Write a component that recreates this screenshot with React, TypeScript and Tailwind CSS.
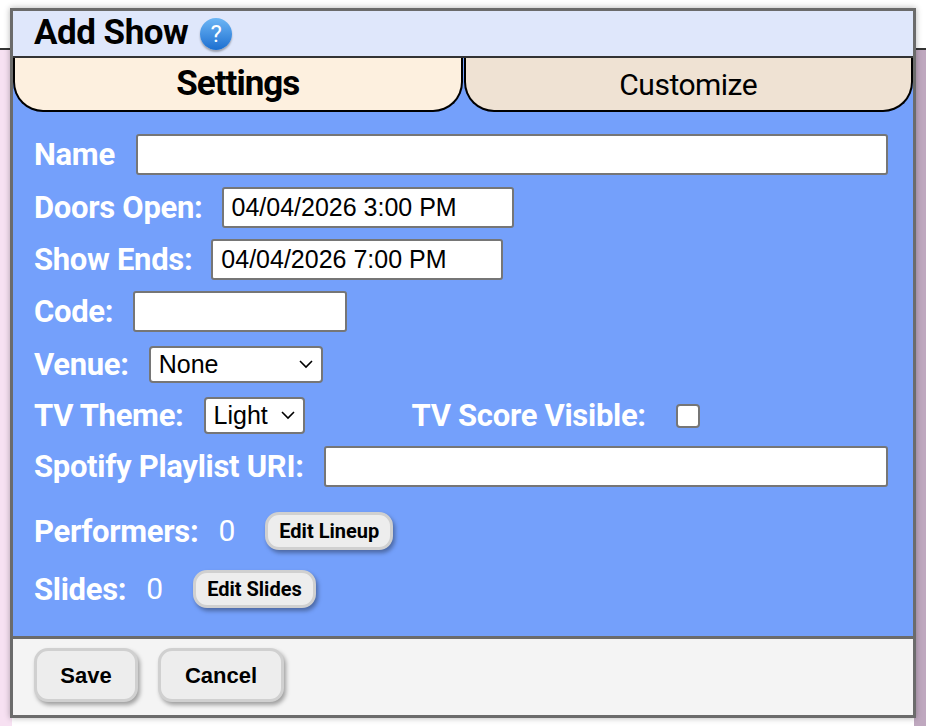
import React from 'react';

const label = 'font-bold text-white text-[31px] leading-none whitespace-nowrap tracking-[-0.3px]';
const field =
  'h-[41px] rounded-[3px] border-2 border-[#767676] bg-white px-2 text-[25px] text-black outline-none';
const pill =
  'rounded-[14px] border-[3px] border-[#d0d0d0] bg-[#ededed] font-bold text-black shadow-[2px_3px_4px_rgba(0,0,0,0.35)]';
const arial = { fontFamily: '"Liberation Sans", Arial, sans-serif' };

function Select({ value, w }: { value: string; w: string }) {
  return (
    <div className={`flex h-[37px] items-center justify-between rounded-[4px] border-2 border-[#767676] bg-white pl-2 pr-2 text-[25px] text-black ${w}`} style={arial}>
      <span>{value}</span>
      <svg width="14" height="9" viewBox="0 0 14 9" fill="none" stroke="#000" strokeWidth="1.6">
        <path d="M1 1l6 6 6-6" />
      </svg>
    </div>
  );
}

export default function App() {
  return (
    <div className="relative h-[726px] w-[926px] overflow-hidden bg-white" style={{ fontFamily: 'Roboto, "Liberation Sans", sans-serif' }}>
      <div className="absolute left-0 top-[48px] h-[678px] w-[12px] border-t-2 border-[#333] bg-[#f7e1f2]" />
      <div className="absolute right-0 top-[48px] h-[678px] w-[12px] border-t-2 border-[#333] bg-[#bfa8bf]" />
      <div className="absolute left-[10px] top-[8px] flex h-[710px] w-[906px] flex-col border-[3px] border-[#6b6b6b] bg-[#74a0fb] shadow-[0_0_6px_rgba(0,0,0,0.3)]">
        <div className="flex h-[47px] items-center gap-3 border-b-2 border-[#333] bg-[#dfe7fb] pl-[21px]">
          <span className="text-[35px] font-bold tracking-[-0.5px] text-black">Add Show</span>
          <span className="flex h-[32px] w-[32px] items-center justify-center rounded-full bg-gradient-to-b from-[#6cb6f5] to-[#1a6fd0] text-[24px] leading-none text-white shadow-[0_2px_2px_rgba(0,0,0,0.3)]">?</span>
        </div>
        <div className="flex h-[54px]">
          <div className="flex flex-1 items-center justify-center rounded-b-[30px] border-2 border-t-0 border-black bg-[#fdf0df] text-[35px] font-bold tracking-[-1px] text-black">
            Settings
          </div>
          <div className="ml-[1px] flex flex-1 items-center justify-center rounded-b-[30px] border-2 border-t-0 border-black bg-[#efe2d3] text-[30px] tracking-[-0.5px] text-black">
            Customize
          </div>
        </div>
        <div className="flex flex-1 flex-col pl-[21px] pr-[25px] pt-[22px]">
          <div className="flex items-center gap-[21px]">
            <span className={label}>Name</span>
            <input className={`${field} flex-1`} style={arial} />
          </div>
          <div className="mt-[12px] flex items-center gap-[19px]">
            <span className={label}>Doors Open:</span>
            <input className={`${field} w-[292px]`} style={arial} defaultValue="04/04/2026 3:00 PM" />
          </div>
          <div className="mt-[11px] flex items-center gap-[19px]">
            <span className={label}>Show Ends:</span>
            <input className={`${field} w-[292px]`} style={arial} defaultValue="04/04/2026 7:00 PM" />
          </div>
          <div className="mt-[11px] flex items-center gap-[20px]">
            <span className={label}>Code:</span>
            <input className={`${field} w-[214px]`} style={arial} />
          </div>
          <div className="mt-[14px] flex items-center gap-[20px]">
            <span className={label}>Venue:</span>
            <Select value="None" w="w-[174px]" />
          </div>
          <div className="mt-[14px] flex items-center">
            <span className={label}>TV Theme:</span>
            <div className="ml-[20px]"><Select value="Light" w="w-[101px]" /></div>
            <span className={`${label} ml-[107px]`}>TV Score Visible:</span>
            <div className="ml-[30px] h-[24px] w-[24px] rounded-[4px] border-2 border-[#767676] bg-white" />
          </div>
          <div className="mt-[12px] flex items-center gap-[20px]">
            <span className={label}>Spotify Playlist URI:</span>
            <input className={`${field} flex-1`} style={arial} />
          </div>
          <div className="mt-[25px] flex items-center">
            <span className={label}>Performers:</span>
            <span className="ml-[20px] text-[30px] leading-none text-white">0</span>
            <button className={`${pill} ml-[30px] h-[38px] px-[11px] text-[20px]`}>Edit Lineup</button>
          </div>
          <div className="mt-[20px] flex items-center">
            <span className={label}>Slides:</span>
            <span className="ml-[20px] text-[30px] leading-none text-white">0</span>
            <button className={`${pill} ml-[30px] h-[38px] px-[11px] text-[20px]`}>Edit Slides</button>
          </div>
        </div>
        <div className="flex h-[79px] items-start gap-[20px] border-t-[3px] border-[#6b6b6b] bg-[#f4f4f4] pl-[21px] pt-[9px]">
          <button className={`${pill} h-[54px] w-[104px] text-[22px]`} style={arial}>Save</button>
          <button className={`${pill} h-[54px] w-[126px] text-[22px]`} style={arial}>Cancel</button>
        </div>
      </div>
    </div>
  );
}
